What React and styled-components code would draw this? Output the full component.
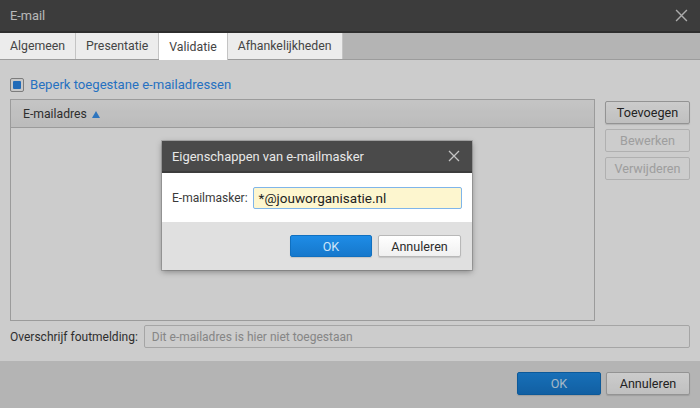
import React from "react";
import styled, { createGlobalStyle } from "styled-components";

const Global = createGlobalStyle`
  html, body { margin: 0; padding: 0; }
  body { font-family: Roboto, "Noto Sans", sans-serif; font-size: 12px; color: #3a3a3a; }
  * { box-sizing: border-box; }
`;

const Page = styled.div`
  position: relative;
  width: 700px;
  height: 408px;
  overflow: hidden;
  background: #fff;
`;

const Window = styled.div`
  display: flex;
  flex-direction: column;
  height: 100%;
`;

const TitleBar = styled.div`
  height: 33px;
  flex: none;
  display: flex;
  align-items: center;
  justify-content: space-between;
  padding: 0 12px 0 10px;
  background: #4b4b4b;
  border-bottom: 2px solid #3a3a3a;
  color: #e6e6e6;
  font-size: 12.8px;
`;

const CloseX = ({ size = 12, color = "#c8c8c8" }) => (
  <svg width={size} height={size} viewBox="0 0 12 12">
    <path d="M1 1L11 11M11 1L1 11" stroke={color} strokeWidth="1.3" fill="none" />
  </svg>
);

const Tabs = styled.div`
  height: 27px;
  flex: none;
  display: flex;
  background: #e1e1e1;
  border-bottom: 1px solid #c4c4c4;
`;

const Tab = styled.div`
  display: flex;
  align-items: center;
  padding: 0 10px;
  height: ${(p) => (p.$active ? "27px" : "26px")};
  background: ${(p) => (p.$active ? "#ffffff" : "#ececec")};
  border-right: 1px solid #c4c4c4;
  color: #444;
  font-size: 12.3px;
  position: relative;
  z-index: 1;
`;

const Body = styled.div`
  flex: 1;
  display: flex;
  flex-direction: column;
  padding: 17px 10px 12px;
  background: #fff;
`;

const CheckRow = styled.label`
  display: flex;
  align-items: center;
  gap: 6px;
  color: #2f8ef2;
  font-size: 13.1px;
  height: 15px;
`;

const CheckBox = styled.span`
  width: 14px;
  height: 14px;
  border: 1px solid #9c9c9c;
  border-radius: 2px;
  background: #fafafa;
  display: flex;
  align-items: center;
  justify-content: center;
  &::after {
    content: "";
    width: 8px;
    height: 8px;
    border-radius: 1px;
    background: #2a86e6;
  }
`;

const Main = styled.div`
  display: flex;
  gap: 10px;
  margin-top: 7px;
  height: 222px;
`;

const Table = styled.div`
  flex: 1;
  display: flex;
  flex-direction: column;
  border: 1px solid #c2c2c2;
`;

const TableHead = styled.div`
  height: 28px;
  display: flex;
  align-items: center;
  padding-left: 12px;
  gap: 4px;
  background: linear-gradient(#f6f6f6, #ebebeb);
  border-bottom: 1px solid #c2c2c2;
  font-size: 12.2px;
  color: #3a3a3a;
`;

const SortArrow = styled.span`
  width: 0;
  height: 0;
  border-left: 4px solid transparent;
  border-right: 4px solid transparent;
  border-bottom: 7px solid #3a93ee;
  margin-left: 1px;
  margin-top: 1px;
`;

const Side = styled.div`
  width: 85px;
  display: flex;
  flex-direction: column;
  gap: 5px;
  padding-top: 2px;
`;

const Button = styled.button`
  height: ${(p) => p.$h || "23px"};
  width: ${(p) => p.$w || "85px"};
  font-family: inherit;
  font-size: 12.6px;
  padding: 0;
  border-radius: 2px;
  border: 1px solid ${(p) => (p.$primary ? "#1070c0" : p.$disabled ? "#dddddd" : "#b8b8b8")};
  background: ${(p) =>
    p.$primary
      ? "linear-gradient(#1e8ce6, #1678cc)"
      : p.$disabled
      ? "#fff"
      : "linear-gradient(#ffffff, #f0f0f0)"};
  color: ${(p) => (p.$primary ? "#cfe4f8" : p.$disabled ? "#c6c6c6" : "#2c2c2c")};
  box-shadow: ${(p) => (p.$disabled ? "none" : "0 1px 1px rgba(0,0,0,0.12)")};
`;

const FieldRow = styled.div`
  display: flex;
  align-items: center;
  margin-top: 4px;
  gap: 6px;
`;

const FieldLabel = styled.span`
  font-size: 12px;
  color: #3a3a3a;
  white-space: nowrap;
`;

const TextInput = styled.div`
  flex: ${(p) => (p.$fixed ? "none" : 1)};
  width: ${(p) => p.$w || "auto"};
  height: ${(p) => p.$h || "23px"};
  display: flex;
  align-items: center;
  padding-left: ${(p) => p.$pl || "7px"};
  border: 1px solid ${(p) => p.$border || "#cfcfcf"};
  border-radius: 2px;
  background: ${(p) => p.$bg || "#fff"};
  color: ${(p) => p.$color || "#a8a8a8"};
  font-size: ${(p) => p.$fs || "12px"};
`;

const Footer = styled.div`
  height: 47px;
  flex: none;
  display: flex;
  align-items: center;
  justify-content: flex-end;
  gap: 5px;
  padding: 0 10px 2px;
  background: #e1e1e1;
`;

const Overlay = styled.div`
  position: absolute;
  inset: 0;
  background: rgba(0, 0, 0, 0.2);
`;

const Modal = styled.div`
  position: absolute;
  left: 162px;
  top: 141px;
  width: 310px;
  display: flex;
  flex-direction: column;
  box-shadow: 0 2px 6px rgba(0, 0, 0, 0.35);
  outline: 1px solid rgba(0, 0, 0, 0.15);
`;

const ModalTitle = styled.div`
  height: 32px;
  display: flex;
  align-items: center;
  justify-content: space-between;
  padding: 0 12px 0 10px;
  background: #4a4a4a;
  border-bottom: 2px solid #3c3c3c;
  color: #e8e8e8;
  font-size: 12.9px;
`;

const ModalBody = styled.div`
  height: 49px;
  display: flex;
  align-items: center;
  gap: 5px;
  padding: 0 11px 0 10px;
  background: #fff;
`;

const ModalFooter = styled.div`
  height: 48px;
  display: flex;
  align-items: center;
  justify-content: flex-end;
  gap: 6px;
  padding: 0 11px 0 0;
  background: #e0e0e0;
`;

export default function App() {
  return (
    <>
      <Global />
      <Page>
        <Window>
          <TitleBar>
            <span>E-mail</span>
            <CloseX size={13} color="#d6d6d6" />
          </TitleBar>
          <Tabs>
            <Tab>Algemeen</Tab>
            <Tab>Presentatie</Tab>
            <Tab $active>Validatie</Tab>
            <Tab>Afhankelijkheden</Tab>
          </Tabs>
          <Body>
            <CheckRow>
              <CheckBox />
              Beperk toegestane e-mailadressen
            </CheckRow>
            <Main>
              <Table>
                <TableHead>
                  E-mailadres <SortArrow />
                </TableHead>
              </Table>
              <Side>
                <Button>Toevoegen</Button>
                <Button $disabled>Bewerken</Button>
                <Button $disabled>Verwijderen</Button>
              </Side>
            </Main>
            <FieldRow>
              <FieldLabel>Overschrijf foutmelding:</FieldLabel>
              <TextInput>Dit e-mailadres is hier niet toegestaan</TextInput>
            </FieldRow>
          </Body>
          <Footer>
            <Button $primary $w="84px">OK</Button>
            <Button $w="84px">Annuleren</Button>
          </Footer>
        </Window>
        <Overlay />
        <Modal>
          <ModalTitle>
            <span>Eigenschappen van e-mailmasker</span>
            <CloseX size={12} color="#c4c4c4" />
          </ModalTitle>
          <ModalBody>
            <FieldLabel>E-mailmasker:</FieldLabel>
            <TextInput $fixed $w="209px" $h="22px" $pl="5px" $bg="#fdf6cf" $border="#7fb5ea" $color="#222" $fs="13.5px">
              *@jouworganisatie.nl
            </TextInput>
          </ModalBody>
          <ModalFooter>
            <Button $primary $w="82px" $h="22px">OK</Button>
            <Button $w="83px" $h="22px">Annuleren</Button>
          </ModalFooter>
        </Modal>
      </Page>
    </>
  );
}
